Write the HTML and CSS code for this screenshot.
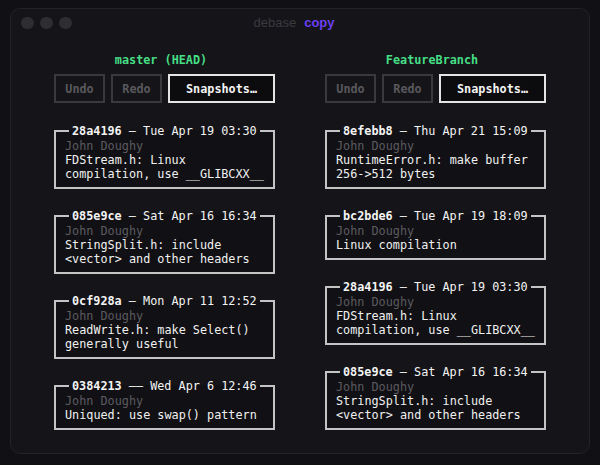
FILE: index.html
```html
<!DOCTYPE html>
<html>
<head>
<meta charset="utf-8">
<link rel="stylesheet" href="styles.css">
</head>
<body>
<div class="window">
  <div class="titlebar">
    <div class="lights"><span class="light"></span><span class="light"></span><span class="light"></span></div>
    <div class="title"><span class="app">debase</span><span class="doc">copy</span></div>
    <div class="spacer"></div>
  </div>
  <div class="columns">
    <div class="column">
      <div class="branch">master (HEAD)</div>
      <div class="buttons">
        <div class="btn disabled">Undo</div>
        <div class="btn disabled">Redo</div>
        <div class="btn primary">Snapshots…</div>
      </div>
      <div class="commits">
        <fieldset class="commit">
          <legend><b>28a4196</b> — Tue Apr 19 03:30</legend>
          <div class="author">John Doughy</div>
          <div class="msg">FDStream.h: Linux</div>
          <div class="msg">compilation, use __GLIBCXX__</div>
        </fieldset>
        <fieldset class="commit">
          <legend><b>085e9ce</b> — Sat Apr 16 16:34</legend>
          <div class="author">John Doughy</div>
          <div class="msg">StringSplit.h: include</div>
          <div class="msg">&lt;vector&gt; and other headers</div>
        </fieldset>
        <fieldset class="commit">
          <legend><b>0cf928a</b> — Mon Apr 11 12:52</legend>
          <div class="author">John Doughy</div>
          <div class="msg">ReadWrite.h: make Select()</div>
          <div class="msg">generally useful</div>
        </fieldset>
        <fieldset class="commit">
          <legend><b>0384213</b> —— Wed Apr 6 12:46</legend>
          <div class="author">John Doughy</div>
          <div class="msg">Uniqued: use swap() pattern</div>
        </fieldset>
      </div>
    </div>
    <div class="column">
      <div class="branch">FeatureBranch</div>
      <div class="buttons">
        <div class="btn disabled">Undo</div>
        <div class="btn disabled">Redo</div>
        <div class="btn primary">Snapshots…</div>
      </div>
      <div class="commits">
        <fieldset class="commit">
          <legend><b>8efebb8</b> — Thu Apr 21 15:09</legend>
          <div class="author">John Doughy</div>
          <div class="msg">RuntimeError.h: make buffer</div>
          <div class="msg">256-&gt;512 bytes</div>
        </fieldset>
        <fieldset class="commit">
          <legend><b>bc2bde6</b> — Tue Apr 19 18:09</legend>
          <div class="author">John Doughy</div>
          <div class="msg">Linux compilation</div>
        </fieldset>
        <fieldset class="commit">
          <legend><b>28a4196</b> — Tue Apr 19 03:30</legend>
          <div class="author">John Doughy</div>
          <div class="msg">FDStream.h: Linux</div>
          <div class="msg">compilation, use __GLIBCXX__</div>
        </fieldset>
        <fieldset class="commit">
          <legend><b>085e9ce</b> — Sat Apr 16 16:34</legend>
          <div class="author">John Doughy</div>
          <div class="msg">StringSplit.h: include</div>
          <div class="msg">&lt;vector&gt; and other headers</div>
        </fieldset>
      </div>
    </div>
  </div>
</div>
</body>
</html>
```
FILE: styles.css
```css
html, body {
  margin: 0;
  padding: 0;
  background: #111014;
}
body {
  padding: 8px 10px 0 10px;
  font-family: "DejaVu Sans Mono", monospace;
  font-size: 11.8px;
  line-height: 14px;
  color: #f0f0f0;
}
.window {
  box-sizing: border-box;
  height: 446px;
  border: 1px solid #232227;
  border-radius: 10px;
  background: #151418;
}
.titlebar {
  height: 28px;
  display: grid;
  grid-template-columns: 1fr auto 1fr;
  align-items: center;
  padding: 0 10px;
}
.lights {
  display: flex;
  gap: 6.5px;
}
.light {
  width: 12.5px;
  height: 12.5px;
  border-radius: 50%;
  background: #2e2d32;
}
.title {
  display: flex;
  gap: 8px;
  font-family: "Liberation Sans", Arial, sans-serif;
  font-size: 13px;
  line-height: 16px;
  margin-right: 12px;
}
.app {
  color: #3b3a40;
}
.doc {
  color: #6b3ff2;
  font-weight: bold;
}
.columns {
  display: flex;
  justify-content: center;
  gap: 50px;
  padding-top: 16px;
}
.column {
  width: 221px;
  display: flex;
  flex-direction: column;
}
.branch {
  text-align: center;
  color: #45df86;
  font-weight: bold;
  padding-right: 7px;
  height: 14px;
}
.buttons {
  display: flex;
  gap: 6px;
  margin-top: 7px;
}
.btn {
  box-sizing: border-box;
  height: 29px;
  border: 2px solid #3a393e;
  display: flex;
  align-items: center;
  justify-content: center;
  font-weight: bold;
  width: 51px;
}
.btn.disabled {
  color: #59585d;
}
.btn.primary {
  width: 107px;
  border-color: #e4e4e4;
  background: #0c0b0e;
  color: #f4f4f4;
}
.commits {
  display: flex;
  flex-direction: column;
  gap: 20px;
  margin-top: 21px;
}
.commit {
  margin: 0;
  min-width: 0;
  border: 2px solid #c4c4c4;
  padding: 1px 9px 6px 9px;
  background: #111014;
}
.commit legend {
  margin-left: 4px;
  padding: 0 3px;
  white-space: nowrap;
  color: #f4f4f4;
}
.commit legend b {
  font-weight: bold;
}
.author {
  color: #5c5b60;
  white-space: nowrap;
}
.msg {
  white-space: nowrap;
}
```
